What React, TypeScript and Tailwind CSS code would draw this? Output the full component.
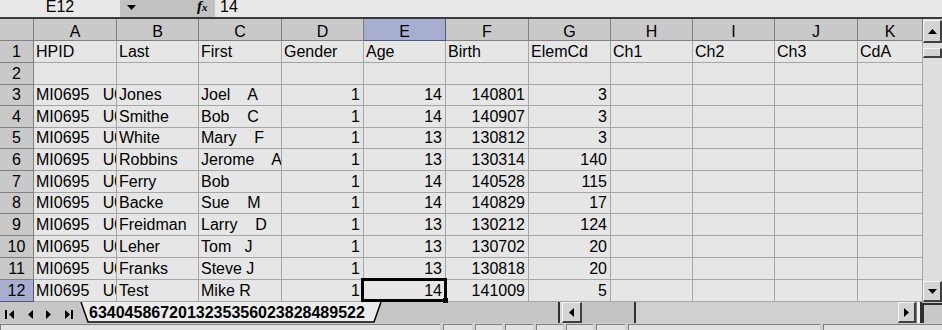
import React from 'react';

const cols = [
  { l: 'A', w: 'w-[83px]' },
  { l: 'B', w: 'w-[82px]' },
  { l: 'C', w: 'w-[83px]' },
  { l: 'D', w: 'w-[82px]' },
  { l: 'E', w: 'w-[82px]' },
  { l: 'F', w: 'w-[83px]' },
  { l: 'G', w: 'w-[82px]' },
  { l: 'H', w: 'w-[82px]' },
  { l: 'I', w: 'w-[82px]' },
  { l: 'J', w: 'w-[83px]' },
  { l: 'K', w: 'w-[65px]' },
];

const rowH = [
  'h-[22px] leading-[21px]',
  'h-[22px] leading-[21px]',
  'h-[21px] leading-[20px]',
  'h-[22px] leading-[21px]',
  'h-[21px] leading-[20px]',
  'h-[22px] leading-[21px]',
  'h-[22px] leading-[21px]',
  'h-[21px] leading-[20px]',
  'h-[22px] leading-[21px]',
  'h-[22px] leading-[21px]',
  'h-[22px] leading-[21px]',
  'h-[22px] leading-[21px]',
];

const people = [
  ['Jones', 'Joel    A', '1', '14', '140801', '3'],
  ['Smithe', 'Bob    C', '1', '14', '140907', '3'],
  ['White', 'Mary    F', '1', '13', '130812', '3'],
  ['Robbins', 'Jerome    A', '1', '13', '130314', '140'],
  ['Ferry', 'Bob', '1', '14', '140528', '115'],
  ['Backe', 'Sue    M', '1', '14', '140829', '17'],
  ['Freidman', 'Larry    D', '1', '13', '130212', '124'],
  ['Leher', 'Tom   J', '1', '13', '130702', '20'],
  ['Franks', 'Steve J', '1', '13', '130818', '20'],
  ['Test', 'Mike R', '1', '14', '141009', '5'],
];

type Row = { cells: string[]; right: boolean[] };

const rows: Row[] = [
  {
    cells: ['HPID', 'Last', 'First', 'Gender', 'Age', 'Birth', 'ElemCd', 'Ch1', 'Ch2', 'Ch3', 'CdA'],
    right: Array(11).fill(false),
  },
  { cells: Array(11).fill(''), right: Array(11).fill(false) },
  ...people.map((p) => ({
    cells: ['MI0695   U0', p[0], p[1], p[2], p[3], p[4], p[5], '', '', '', ''],
    right: [false, false, false, true, true, true, true, false, false, false, false],
  })),
];

function TriUp() {
  return (
    <svg width="9" height="5" viewBox="0 0 9 5">
      <polygon points="0,5 9,5 4.5,0" fill="#000" />
    </svg>
  );
}
function TriDown() {
  return (
    <svg width="9" height="5" viewBox="0 0 9 5">
      <polygon points="0,0 9,0 4.5,5" fill="#000" />
    </svg>
  );
}
function TriLeft() {
  return (
    <svg width="5" height="9" viewBox="0 0 5 9">
      <polygon points="5,0 5,9 0,4.5" fill="#000" />
    </svg>
  );
}
function TriRight() {
  return (
    <svg width="5" height="9" viewBox="0 0 5 9">
      <polygon points="0,0 0,9 5,4.5" fill="#000" />
    </svg>
  );
}

export default function App() {
  return (
    <div className="w-[942px] h-[330px] overflow-hidden bg-[#c6c6c6] text-black font-['Liberation_Sans',Arial,sans-serif] text-[16px]">
      {/* Formula bar */}
      <div className="flex h-[19px] border-b-2 border-[#3a3a3a] bg-[#e9e9e9] leading-[14px]">
        <div className="w-[120px] shrink-0 text-center">E12</div>
        <div className="w-[95px] shrink-0 bg-[#c2c2c2] flex items-start">
          <div className="ml-[7px] mt-[5px]">
            <TriDown />
          </div>
          <div className="ml-[61px] font-['Liberation_Serif',serif] italic font-bold text-[15px] leading-[13px]">
            f<span className="text-[11px]">x</span>
          </div>
        </div>
        <div className="pl-[5px]">14</div>
      </div>

      {/* Grid + vertical scrollbar */}
      <div className="flex">
        <div className="w-[923px] shrink-0 flex flex-col bg-[#e6e6e6]">
          {/* Column headers */}
          <div className="flex h-[22px] leading-[25px] overflow-hidden">
            <div className="w-[34px] shrink-0 bg-[#c9c9c9] border-r border-b border-[#808080]" />
            {cols.map((c) => (
              <div
                key={c.l}
                className={`${c.w} shrink-0 text-center border-r border-b overflow-hidden ${
                  c.l === 'E' ? 'bg-[#a8aecf] border-[#4e5684]' : 'bg-[#c9c9c9] border-[#808080]'
                }`}
              >
                {c.l}
              </div>
            ))}
          </div>
          {rows.map((r, i) => {
            const last = i === 11;
            return (
              <div key={i} className={`flex ${rowH[i]}`}>
                <div
                  className={`w-[34px] shrink-0 text-center border-r border-b ${
                    last ? 'bg-[#a8aecf] border-[#4e5684]' : 'bg-[#c9c9c9] border-[#808080]'
                  }`}
                >
                  {i + 1}
                </div>
                {cols.map((c, j) => (
                  <div
                    key={c.l}
                    className={`${c.w} shrink-0 relative border-r border-b border-[#a6a6a6] whitespace-pre ${
                      r.right[j] ? 'text-right pr-[3px]' : 'pl-[2px]'
                    }`}
                  >
                    <div className="overflow-hidden h-full">{r.cells[j]}</div>
                    {last && c.l === 'E' && (
                      <>
                        <div className="absolute left-[-3px] top-[-2px] w-[86px] h-[24px] border-[3px] border-black z-10 pointer-events-none" />
                        <div className="absolute left-[79px] top-[18px] w-[5px] h-[5px] bg-black z-20" />
                      </>
                    )}
                  </div>
                ))}
              </div>
            );
          })}
        </div>

        {/* Vertical scrollbar */}
        <div className="w-[19px] h-[283px] shrink-0 flex flex-col bg-[#dedede]">
          <div className="h-[23px] mt-[1px] flex items-center justify-center bg-[#d4d4d4] border-t border-l border-t-[#f6f6f6] border-l-[#f6f6f6] border-b-2 border-r-2 border-b-[#404040] border-r-[#404040]">
            <TriUp />
          </div>
          <div className="h-[5px]" />
          <div className="h-[10px] bg-[#d4d4d4] border-t border-l border-[#f6f6f6] border-b-2 border-r-2 border-b-[#404040] border-r-[#404040]" />
          <div className="flex-1" />
          <div className="h-[21px] flex items-center justify-center bg-[#d4d4d4] border-t border-l border-t-[#f6f6f6] border-l-[#f6f6f6] border-b-2 border-r-2 border-b-[#404040] border-r-[#404040]">
            <TriDown />
          </div>
        </div>
      </div>

      {/* Tab bar + horizontal scrollbar */}
      <div className="flex h-[21px] bg-[#c6c6c6]">
        <div className="w-[80px] shrink-0">
          <svg width="80" height="21" viewBox="0 0 80 21">
            <rect x="5" y="8" width="2" height="9" fill="#000" />
            <polygon points="14,8 14,17 9,12.5" fill="#000" />
            <polygon points="33,8 33,17 28,12.5" fill="#000" />
            <polygon points="46,8 46,17 51,12.5" fill="#000" />
            <polygon points="65,8 65,17 70,12.5" fill="#000" />
            <rect x="71" y="8" width="2" height="9" fill="#000" />
          </svg>
        </div>
        <div className="w-[302px] shrink-0 relative">
          <svg className="absolute left-0 top-0" width="302" height="21" viewBox="0 0 302 21">
            <polygon points="1,0 8,20 294,20 301,0" fill="#ececec" />
            <polyline points="1,0 8,20 294,20 301,0" fill="none" stroke="#000" strokeWidth="1.5" />
          </svg>
          <div className="relative pl-[9px] font-bold text-[16px] leading-[21px]">6340458672013235356023828489522</div>
        </div>
        <div className="w-[176px] shrink-0" />
        <div className="w-[4px] shrink-0 bg-[#d8d8d8] border-l-2 border-[#303030]" />
        <div className="w-[20px] shrink-0 flex items-center justify-center bg-[#d4d4d4] border-t border-l border-[#f6f6f6] border-b-2 border-r-2 border-b-[#404040] border-r-[#404040]">
          <TriLeft />
        </div>
        <div className="w-[54px] shrink-0 bg-[#c4c4c4] border-r-2 border-[#303030]" />
        <div className="w-[262px] shrink-0 bg-[#d0d0d0]" />
        <div className="w-[18px] shrink-0 flex items-center justify-center bg-[#d4d4d4] border-t border-l border-[#f6f6f6] border-b-2 border-r-2 border-b-[#404040] border-r-[#404040]">
          <TriRight />
        </div>
        <div className="w-[6px] shrink-0 bg-[#f0f0f0] border-l border-r-2 border-l-[#808080] border-r-[#303030]" />
        <div className="w-[20px] shrink-0 bg-[#c8c8c8] border-t-2 border-l-2 border-[#303030] mt-[1px]" />
      </div>

      {/* Status bar */}
      <div className="flex h-[7px] gap-[3px] bg-[#cfcfcf] pt-[1px]">
        <div className="w-[440px] shrink-0 bg-[#e2e2e2] border-t border-l border-[#808080]" />
        <div className="w-[29px] shrink-0 bg-[#e2e2e2] border-t border-l border-[#808080]" />
        <div className="w-[27px] shrink-0 bg-[#e2e2e2] border-t border-l border-[#808080]" />
        <div className="w-[28px] shrink-0 bg-[#e2e2e2] border-t border-l border-[#808080]" />
        <div className="w-[27px] shrink-0 bg-[#e2e2e2] border-t border-l border-[#808080]" />
        <div className="w-[27px] shrink-0 bg-[#e2e2e2] border-t border-l border-[#808080]" />
        <div className="w-[29px] shrink-0 bg-[#e2e2e2] border-t border-l border-[#808080]" />
        <div className="w-[192px] shrink-0 bg-[#e2e2e2] border-t border-l border-[#808080]" />
        <div className="flex-1 bg-[#e2e2e2] border-t border-l border-[#808080]" />
      </div>
    </div>
  );
}
